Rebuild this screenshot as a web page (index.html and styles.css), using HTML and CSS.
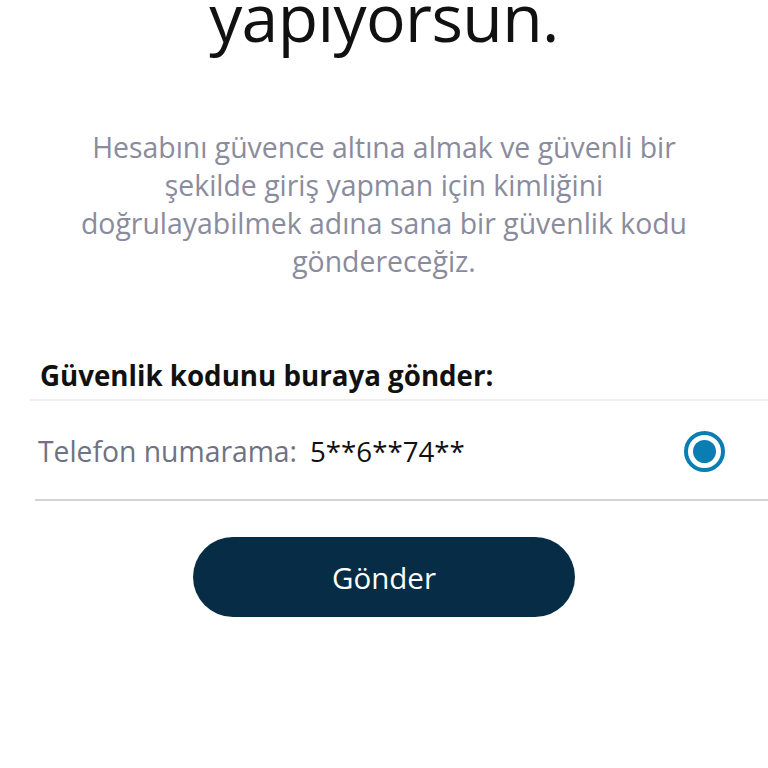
FILE: index.html
```
<!DOCTYPE html>
<html lang="tr">
<head>
<meta charset="utf-8">
<link rel="stylesheet" href="styles.css">
</head>
<body>
<main class="page">
  <h1 class="title">yapıyorsun.</h1>
  <p class="desc">Hesabını güvence altına almak ve güvenli bir şekilde giriş yapman için kimliğini doğrulayabilmek adına sana bir güvenlik kodu göndereceğiz.</p>
  <h2 class="section">Güvenlik kodunu buraya gönder:</h2>
  <div class="option">
    <span class="label">Telefon numarama:</span>
    <span class="number">5**6**74**</span>
    <span class="radio"><span class="dot"></span></span>
  </div>
  <div class="actions">
    <button class="send">Gönder</button>
  </div>
</main>
</body>
</html>
```
FILE: styles.css
```
html, body {
  margin: 0;
  padding: 0;
  background: #ffffff;
}
body {
  font-family: "Open Sans", "Noto Sans", sans-serif;
  width: 768px;
  height: 768px;
  overflow: hidden;
}
.page {
  display: flex;
  flex-direction: column;
}
.title {
  margin: -24px 0 0;
  font-size: 66px;
  font-weight: 400;
  line-height: 80px;
  text-align: center;
  color: #111111;
  letter-spacing: -0.6px;
}
.desc {
  margin: 72px auto 0;
  width: 640px;
  font-size: 28.4px;
  line-height: 38px;
  text-align: center;
  color: #8a8b9c;
}
.section {
  margin: 78px 0 0 40px;
  font-size: 27.7px;
  font-weight: 700;
  line-height: 34px;
  color: #111111;
}
.option {
  margin: 7px 0 0 30px;
  border-top: 2px solid #efefef;
  display: flex;
  align-items: center;
  height: 102px;
  box-sizing: border-box;
  padding-left: 8px;
  padding-right: 43px;
  position: relative;
}
.option::after {
  content: "";
  position: absolute;
  left: 5px;
  right: 0;
  bottom: 0;
  border-bottom: 2px solid #d4d4d4;
}
.label {
  font-size: 28.3px;
  color: #6f7184;
}
.number {
  margin-left: 13px;
  font-size: 27.7px;
  color: #111111;
}
.radio {
  margin-left: auto;
  width: 33px;
  height: 33px;
  border: 4px solid #0a7db3;
  border-radius: 50%;
  display: flex;
  align-items: center;
  justify-content: center;
}
.dot {
  width: 23px;
  height: 23px;
  border-radius: 50%;
  background: #0a7db3;
}
.actions {
  display: flex;
  justify-content: center;
  margin-top: 36px;
}
.send {
  width: 382px;
  height: 80px;
  border: none;
  border-radius: 40px;
  background: #062d45;
  color: #ffffff;
  font-family: "Open Sans", "Noto Sans", sans-serif;
  font-size: 29.5px;
  margin-left: 0;
}
```
